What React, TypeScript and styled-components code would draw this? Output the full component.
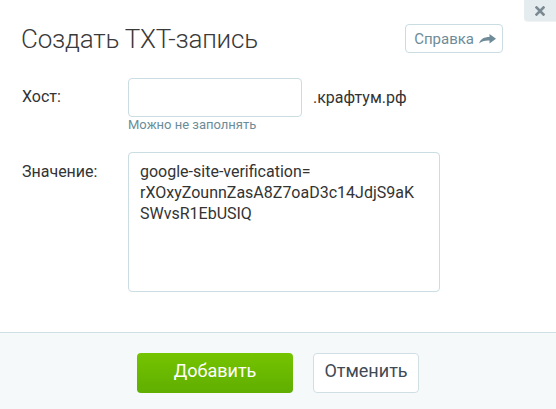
import React from "react";
import styled, { createGlobalStyle } from "styled-components";

const Global = createGlobalStyle`
  html, body { margin: 0; padding: 0; background: #fff; }
  body { font-family: Roboto, "Liberation Sans", Arial, sans-serif; }
  * { box-sizing: border-box; }
`;

const Dialog = styled.div`
  position: relative;
  width: 556px;
  height: 409px;
  display: flex;
  flex-direction: column;
  background: #fff;
  overflow: hidden;
`;

const CloseButton = styled.button`
  position: absolute;
  top: 0;
  right: 0;
  width: 32px;
  height: 21px;
  border: none;
  padding: 0;
  background: #e5ecef;
  border-bottom-left-radius: 4px;
  box-shadow: 0 1px 1px rgba(0, 0, 0, 0.06);
  display: flex;
  align-items: center;
  justify-content: center;
  cursor: pointer;
`;

const Header = styled.div`
  display: flex;
  align-items: center;
  justify-content: space-between;
  height: 29px;
  margin-top: 24px;
  padding: 0 53px 0 21px;
`;

const Title = styled.h1`
  margin: 0;
  font-size: 26px;
  font-weight: 300;
  color: #3a3a3a;
  line-height: 30px;
  letter-spacing: -0.2px;
`;

const HelpButton = styled.a`
  display: flex;
  align-items: center;
  gap: 5px;
  height: 29px;
  padding: 0 6px 0 8px;
  border: 1px solid #c9dde3;
  border-radius: 4px;
  color: #6e8b97;
  font-size: 15px;
  text-decoration: none;
`;

const Form = styled.div`
  display: flex;
  flex-direction: column;
  padding: 25px 0 0 22px;
  flex: 1;
`;

const Row = styled.div<{ $gap?: number }>`
  display: flex;
  align-items: flex-start;
  margin-bottom: ${(p) => p.$gap ?? 0}px;
`;

const Label = styled.label<{ $top: number }>`
  width: 106px;
  flex-shrink: 0;
  font-size: 16px;
  color: #333;
  line-height: 20px;
  padding-top: ${(p) => p.$top}px;
`;

const FieldCol = styled.div`
  display: flex;
  flex-direction: column;
`;

const InputLine = styled.div`
  display: flex;
  align-items: center;
  gap: 11px;
`;

const TextInput = styled.input`
  width: 174px;
  height: 39px;
  border: 1px solid #c9dde3;
  border-radius: 4px;
  padding: 0 11px;
  font-family: inherit;
  font-size: 16px;
  color: #333;
  outline: none;
`;

const Suffix = styled.span`
  font-size: 16px;
  color: #333;
`;

const Hint = styled.span`
  font-size: 13px;
  color: #6b8d98;
  line-height: 16px;
`;

const TextArea = styled.textarea`
  width: 312px;
  height: 140px;
  border: 1px solid #c9dde3;
  border-radius: 4px;
  padding: 8px 11px;
  font-family: inherit;
  font-size: 16px;
  line-height: 21px;
  color: #333;
  resize: none;
  outline: none;
  white-space: pre-wrap;
  word-break: break-all;
`;

const Footer = styled.div`
  height: 77px;
  border-top: 1px solid #cfe0e5;
  background: #f5f9fa;
  display: flex;
  justify-content: center;
  align-items: flex-start;
  gap: 20px;
  padding-top: 20px;
`;

const Button = styled.button<{ $primary?: boolean; $w: number }>`
  width: ${(p) => p.$w}px;
  height: 40px;
  border-radius: 4px;
  font-family: inherit;
  font-size: 18px;
  line-height: 20px;
  padding: 0 0 4px;
  cursor: pointer;
  ${(p) =>
    p.$primary
      ? `
    border: none;
    color: #fff;
    background: linear-gradient(#75c400, #60ae00);
  `
      : `
    border: 1px solid #d0dfe4;
    color: #3f4a55;
    background: #fff;
  `}
`;

const VALUE = "google-site-verification=\nrXOxyZounnZasA8Z7oaD3c14JdjS9aK\nSWvsR1EbUSIQ";

export default function App() {
  return (
    <>
      <Global />
      <Dialog>
        <CloseButton aria-label="close">
          <svg width="10" height="10" viewBox="0 0 10 10">
            <path
              d="M1.5 1.5 L8.5 8.5 M8.5 1.5 L1.5 8.5"
              stroke="#7a8a93"
              strokeWidth="2.6"
              strokeLinecap="square"
            />
          </svg>
        </CloseButton>
        <Header>
          <Title>Создать ТХТ-запись</Title>
          <HelpButton href="#">
            Справка
            <svg width="17" height="10" viewBox="0 0 17 10">
              <path
                d="M0 9.5 C1.5 5, 5 3, 10.5 3 V0 L17 4.8 L10.5 9.5 V6.6 C6 6.4, 2.5 7.3, 0 9.5 Z"
                fill="#6e8b97"
              />
            </svg>
          </HelpButton>
        </Header>
        <Form>
          <Row $gap={19}>
            <Label $top={9}>Хост:</Label>
            <FieldCol>
              <InputLine>
                <TextInput />
                <Suffix>.крафтум.рф</Suffix>
              </InputLine>
              <Hint>Можно не заполнять</Hint>
            </FieldCol>
          </Row>
          <Row>
            <Label $top={10}>Значение:</Label>
            <TextArea readOnly value={VALUE} />
          </Row>
        </Form>
        <Footer>
          <Button $primary $w={156}>Добавить</Button>
          <Button $w={106}>Отменить</Button>
        </Footer>
      </Dialog>
    </>
  );
}
